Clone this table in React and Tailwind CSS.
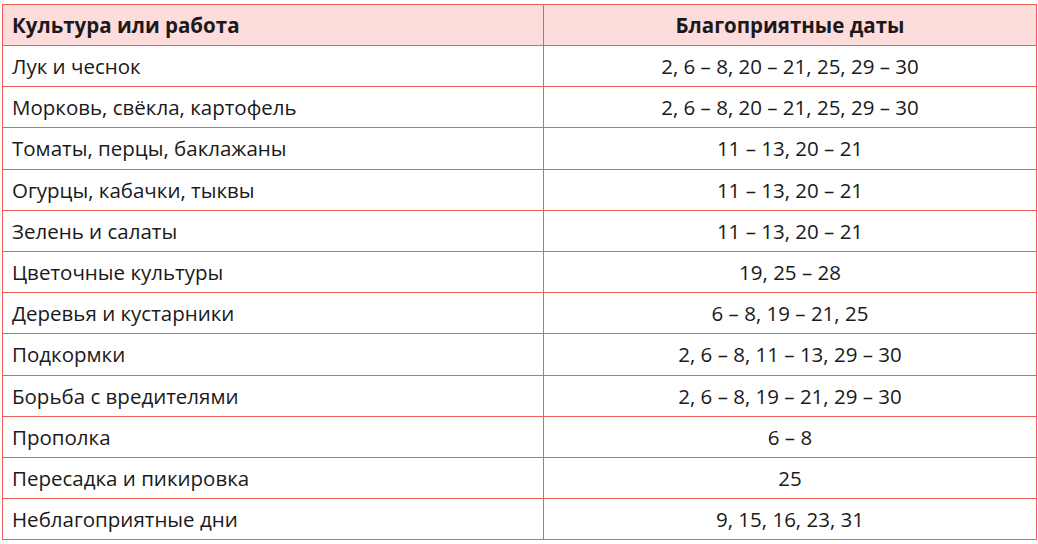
import React from 'react';

const rows = [
  ['Лук и чеснок', '2, 6 – 8, 20 – 21, 25, 29 – 30'],
  ['Морковь, свёкла, картофель', '2, 6 – 8, 20 – 21, 25, 29 – 30'],
  ['Томаты, перцы, баклажаны', '11 – 13, 20 – 21'],
  ['Огурцы, кабачки, тыквы', '11 – 13, 20 – 21'],
  ['Зелень и салаты', '11 – 13, 20 – 21'],
  ['Цветочные культуры', '19, 25 – 28'],
  ['Деревья и кустарники', '6 – 8, 19 – 21, 25'],
  ['Подкормки', '2, 6 – 8, 11 – 13, 29 – 30'],
  ['Борьба с вредителями', '2, 6 – 8, 19 – 21, 29 – 30'],
  ['Прополка', '6 – 8'],
  ['Пересадка и пикировка', '25'],
  ['Неблагоприятные дни', '9, 15, 16, 23, 31'],
];

const App = () => {
  return (
    <div className="bg-white min-h-screen pt-[4px] pl-[2px] font-['Open_Sans',sans-serif] text-[#1a1a1a]">
      <table className="w-[1035px] border-collapse text-[20.5px] leading-[26px]">
        <thead>
          <tr className="bg-[#fddcdc] h-[41px]">
            <th className="w-[541px] border-[1.5px] border-[#ec5f59] px-[9px] text-left font-bold">Культура или работа</th>
            <th className="border-[1.5px] border-[#ec5f59] px-[9px] text-center font-bold">Благоприятные даты</th>
          </tr>
        </thead>
        <tbody>
          {rows.map(([name, dates]) => (
            <tr key={name} className="h-[41.2px]">
              <td className="border-[1.5px] border-[#ec5f59] px-[9px]">{name}</td>
              <td className="border-[1.5px] border-[#ec5f59] px-[9px] text-center">{dates}</td>
            </tr>
          ))}
        </tbody>
      </table>
    </div>
  );
};

export default App;
